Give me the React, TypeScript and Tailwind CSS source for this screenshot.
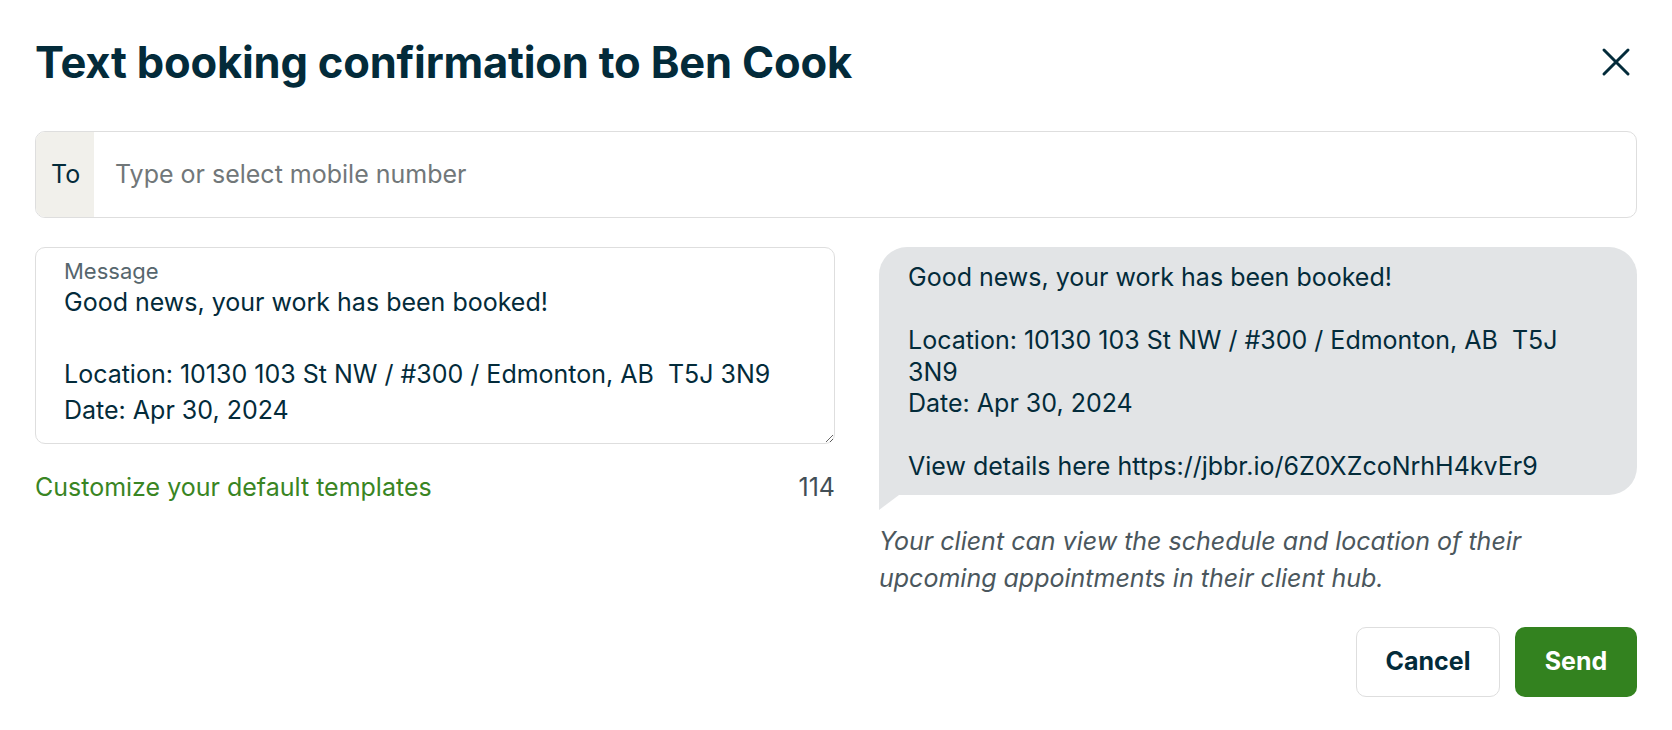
import { useState } from "react"

const message = `Good news, your work has been booked!

Location: 10130 103 St NW / #300 / Edmonton, AB  T5J 3N9
Date: Apr 30, 2024

View details here https://jbbr.io/6Z0XZcoNrhH4kvEr9`

function CloseIcon() {
  return (
    <svg width="32" height="32" viewBox="0 0 32 32" fill="none">
      <path d="M4 4L28 28M28 4L4 28" stroke="#032b3a" strokeWidth="3" strokeLinecap="round" />
    </svg>
  )
}

export default function App() {
  const [text, setText] = useState(message)
  const [phone, setPhone] = useState("")

  return (
    <div className="w-full h-[730px] bg-white px-[35px] pt-[38px] font-['Inter',sans-serif] text-[#032b3a]">
      {/* Header */}
      <div className="flex items-center justify-between h-[48px]">
        <h1 className="text-[43.5px] leading-[48px] font-bold tracking-[-0.2px]">
          Text booking confirmation to Ben Cook
        </h1>
        <button className="w-[42px] h-[42px] flex items-center justify-center">
          <CloseIcon />
        </button>
      </div>

      {/* Recipient */}
      <div className="mt-[45px] flex h-[87px] border border-[#dedede] rounded-[10px] overflow-hidden">
        <div className="w-[58px] bg-[#f1f0eb] flex items-center pl-[15px] text-[25px]">To</div>
        <input
          value={phone}
          onChange={(e) => setPhone(e.target.value)}
          placeholder="Type or select mobile number"
          className="flex-1 pl-[21px] text-[25px] outline-none placeholder:text-[#717779]"
        />
      </div>

      <div className="mt-[29px] flex">
        {/* Message editor */}
        <div className="w-[800px]">
          <div className="relative">
            <span className="absolute left-[29px] top-[11px] text-[22px] leading-[26px] text-[#56666d] pointer-events-none">
              Message
            </span>
            <textarea
              value={text}
              onChange={(e) => setText(e.target.value)}
              className="block w-full h-[197px] border border-[#dedede] rounded-[10px] pt-[36px] pl-[28px] pr-[28px] text-[25px] leading-[36px] outline-none overflow-hidden resize-y"
            />
          </div>
          <div className="mt-[27px] flex items-center justify-between text-[25px] leading-[32px]">
            <a className="text-[#398523]">Customize your default templates</a>
            <span className="text-[#424e56]">{text.length > 0 ? 114 : 0}</span>
          </div>
        </div>

        {/* Preview */}
        <div className="ml-[44px] flex-1">
          <div className="relative">
            <div className="bg-[#e2e4e6] rounded-[28px] rounded-bl-none pl-[29px] pr-[28px] pt-[15px] pb-[12px] text-[25px] leading-[31.5px] whitespace-pre-wrap">
              {text}
            </div>
            <svg className="absolute left-0 top-full" width="20" height="15" viewBox="0 0 20 15">
              <path d="M0 0H20L0 15Z" fill="#e2e4e6" />
            </svg>
          </div>
          <p className="mt-[28px] max-w-[680px] text-[25px] leading-[37px] italic text-[#4b575d]">
            Your client can view the schedule and location of their upcoming appointments in their client hub.
          </p>
          <div className="mt-[30px] flex justify-end gap-[15px]">
            <button className="w-[144px] h-[70px] rounded-[10px] border border-[#dedede] bg-white text-[25px] font-bold">
              Cancel
            </button>
            <button className="w-[122px] h-[70px] rounded-[10px] bg-[#33821f] text-white text-[25px] font-bold">
              Send
            </button>
          </div>
        </div>
      </div>
    </div>
  )
}
